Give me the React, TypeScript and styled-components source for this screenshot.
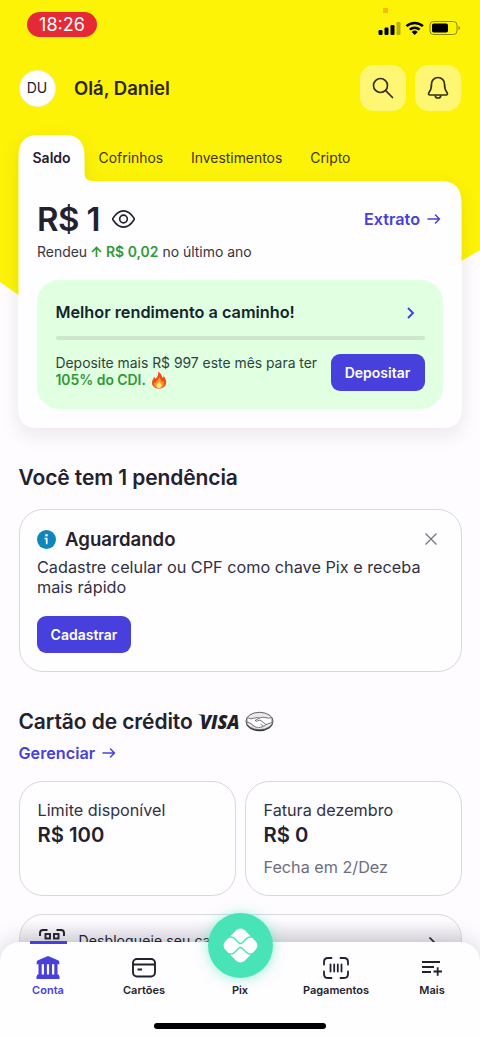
import React from "react";
import styled, { createGlobalStyle } from "styled-components";

const ink = "#222130";
const blue = "#4740dc";
const green = "#2f9a36";

const Global = createGlobalStyle`
  * { box-sizing: border-box; }
  body { margin: 0; background: #fefcff; font-family: Inter, "Liberation Sans", sans-serif; color: ${ink}; }
  svg { display: block; flex: none; }
`;

const Screen = styled.div`
  position: relative;
  width: 480px;
  height: 1038px;
  overflow: hidden;
  background: #fefcff;
`;
const Backdrop = styled.svg`
  position: absolute;
  top: 0;
  left: 0;
`;
const Content = styled.div`
  position: relative;
  padding: 0 18.5px;
`;
const StatusBar = styled.div`
  display: flex;
  justify-content: space-between;
  height: 56px;
  padding: 12px 0 0 8.5px;
`;
const StatusTray = styled.div`
  display: flex;
  align-items: center;
  height: 32px;
`;
const TimePill = styled.div`
  width: 70px;
  height: 25px;
  border-radius: 13px;
  background: #e62a35;
  color: #fff;
  font-size: 18px;
  line-height: 25px;
  text-align: center;
`;
const RecordDot = styled.i`
  position: absolute;
  left: 383px;
  top: 8px;
  width: 5px;
  height: 5px;
  background: #f4bd0c;
`;
const Header = styled.header`
  display: flex;
  align-items: center;
  height: 64px;
  padding-right: 0.5px;
`;
const Avatar = styled.div`
  width: 37px;
  height: 37px;
  border-radius: 50%;
  background: #fff;
  border: 1px solid #f3eecb;
  font-size: 14px;
  line-height: 34px;
  text-align: center;
`;
const Greeting = styled.h1`
  flex: 1;
  margin: 0 0 0 18.5px;
  font-size: 18.5px;
  font-weight: 600;
  color: #2d260f;
`;
const HeaderButton = styled.div`
  display: grid;
  place-items: center;
  width: 46px;
  height: 46px;
  margin-left: 9.5px;
  border-radius: 14px;
  background: #fff774;
`;
const Tabs = styled.nav`
  display: flex;
  height: 46px;
  margin-top: 15px;
`;
const Tab = styled.div<{ $active?: boolean }>`
  font-size: ${(p) => (p.$active ? 14 : 13.9)}px;
  line-height: 46px;
  margin-left: ${(p) => (p.$active ? 14 : 28)}px;
  font-weight: ${(p) => (p.$active ? 600 : 400)};
  color: ${(p) => (p.$active ? ink : "#41340f")};
`;
const BalanceCard = styled.section`
  height: 247px;
  padding: 19px 18.5px 0;
`;
const Row = styled.div`
  display: flex;
  align-items: center;
`;
const Amount = styled.div`
  margin-right: 12px;
  font-size: 33px;
  line-height: 38px;
  font-weight: 600;
  letter-spacing: -0.6px;
`;
const LinkText = styled.div<{ $end?: boolean }>`
  display: flex;
  align-items: center;
  gap: 7px;
  margin-left: ${(p) => (p.$end ? "auto" : 0)};
  margin-right: 2px;
  font-size: 16.2px;
  line-height: 22px;
  font-weight: 600;
  color: ${blue};
`;
const Yield = styled.div`
  display: flex;
  align-items: center;
  gap: 4px;
  margin-top: 5px;
  font-size: 13.95px;
  line-height: 18px;
  color: #363541;
`;
const Accent = styled.span`
  color: ${green};
  font-weight: 600;
`;
const Offer = styled.div`
  height: 129px;
  margin-top: 19px;
  padding: 22px 18.5px 0;
  border-radius: 22px;
  background: #e1ffe1;
`;
const OfferTitle = styled.div`
  display: flex;
  justify-content: space-between;
  align-items: center;
  padding-right: 10px;
  font-size: 16.25px;
  line-height: 21px;
  font-weight: 600;
  color: #12252c;
`;
const Progress = styled.div`
  height: 4px;
  margin-top: 12.5px;
  border-radius: 2px;
  background: #cfe6ce;
`;
const OfferBottom = styled.div`
  display: flex;
  justify-content: space-between;
  margin-top: 14px;
  font-size: 13.9px;
  line-height: 17.5px;
  color: #2d443a;
`;
const OfferText = styled.div`
  padding-top: 1px;
  white-space: nowrap;
  svg { display: inline-block; vertical-align: -4px; margin: -4px 0 0 1px; }
`;
const Button = styled.button`
  height: 37px;
  padding: 0;
  border: 0;
  border-radius: 9px;
  background: ${blue};
  color: #fff;
  font: 600 14px/37px Inter, sans-serif;
  width: 94px;
`;
const SectionTitle = styled.h2`
  display: flex;
  align-items: center;
  margin: 36px 0 0;
  font-size: 21px;
  line-height: 28px;
  font-weight: 600;
  letter-spacing: -0.1px;
`;
const Panel = styled.section`
  border: 1px solid #d9d7df;
  border-radius: 24px;
  background: #fefdff;
`;
const Pending = styled(Panel)`
  height: 163px;
  margin-top: 17px;
  padding: 17px 22.5px 0 17.5px;
`;
const PendingTitle = styled.div`
  flex: 1;
  margin-left: 9px;
  font-size: 18.6px;
  line-height: 24px;
  font-weight: 600;
`;
const PendingText = styled.p`
  margin: 6px 0 19px;
  font-size: 16.25px;
  line-height: 20px;
  color: #32313f;
`;
const Visa = styled.svg`
  margin-left: 5px;
`;
const CardLogo = styled.svg`
  margin-left: 2px;
  margin-top: -2px;
`;
const Manage = styled(Row)`
  margin-top: 6px;
`;
const Cards = styled.div`
  display: grid;
  grid-template-columns: 1fr 1fr;
  gap: 9px;
  margin-top: 17px;
`;
const InfoCard = styled(Panel)`
  height: 115px;
  padding: 16px 18px;
  font-size: 16.2px;
  line-height: 24px;
  color: #32313f;
`;
const Value = styled.div`
  font-size: 20.3px;
  line-height: 26px;
  font-weight: 600;
  color: ${ink};
`;
const Note = styled.div`
  margin-top: 7px;
  color: #6f6d7b;
`;
const Unlock = styled(Panel)`
  display: flex;
  height: 70px;
  margin-top: 18px;
  padding: 13px 24px 0 18px;
  font-size: 14px;
  line-height: 26px;
  background: linear-gradient(#fefcff 0 5px, #e4e2e8 28px);
`;
const UnlockText = styled.div`
  flex: 1;
  margin-left: 13px;
  letter-spacing: 0.1px;
`;
const BottomNav = styled.nav`
  position: absolute;
  left: 0;
  right: 0;
  bottom: 0;
  height: 96px;
  display: grid;
  grid-template-columns: repeat(5, 96px);
  border-radius: 20px 20px 0 0;
  background: #fefdff;
  box-shadow: 0 -2px 22px rgba(30, 25, 50, 0.16);
`;
const NavItem = styled.div<{ $active?: boolean }>`
  position: relative;
  display: flex;
  flex-direction: column;
  align-items: center;
  padding-top: 13px;
  font-size: 11px;
  line-height: 16px;
  font-weight: 600;
  color: ${(p) => (p.$active ? blue : ink)};
`;
const NavIcon = styled.div`
  display: grid;
  place-items: center;
  height: 26px;
  margin-bottom: 1px;
`;
const ActiveBar = styled.i`
  position: absolute;
  top: -1px;
  left: 29.5px;
  width: 37px;
  height: 3px;
  background: ${blue};
`;
const PixButton = styled.div`
  position: absolute;
  left: 15.5px;
  top: -29.5px;
  width: 65px;
  height: 65px;
  display: grid;
  place-items: center;
  border-radius: 50%;
  background: #48e4b7;
  box-shadow: 0 1px 13px rgba(72, 228, 183, 0.55);
`;
const HomeBar = styled.i`
  position: absolute;
  left: 154px;
  bottom: 9.5px;
  width: 172px;
  height: 6px;
  border-radius: 3px;
  background: #000;
`;

const Arrow = () => (
  <svg width="14" height="12" viewBox="0 0 14 12" fill="none" stroke="currentColor" strokeWidth="1.5" strokeLinecap="round" strokeLinejoin="round">
    <path d="M1 6h11.5M8.5 2l4 4-4 4" />
  </svg>
);

const Flame = () => (
  <svg width="16" height="18" viewBox="0 0 16 18">
    <path d="M7 .5C11 3 10.500 5.500 12 7c.6-.6.5-1.600.4-2.300 2 2.200 3 4.500 2.700 7.300-.4 3.600-3.400 5.500-7.100 5.500S1 15.500 1 12C1 9 2.500 8 3.300 6c.8.700 1 1.300 1.100 2C6.500 6 7.800 3.500 7 .5Z" fill="#ee4b20" />
    <path d="M8.300 5.500c.2 2.700 2.500 3.500 2.600 5.500.7-.3 1-1 1.100-1.600 1.600 3.500 1 7.300-3.600 7.600-4.200.2-6.300-2.600-5-6 .5.700.9 1 1.500 1.200C5 9.500 8 8.500 8.300 5.500Z" fill="#fb9928" />
    <path d="M8.500 10c.2 1.800 1.900 2.300 1.900 4.400 0 1.700-1 2.600-2.500 2.600-1.700 0-2.600-1.100-2.500-2.500C5.500 12.700 8 12.300 8.500 10Z" fill="#ffe878" />
  </svg>
);

const StatusIcons = () => (
  <svg width="84" height="16" viewBox="0 0 84 16">
    <rect x="0.500" y="10" width="4" height="5" rx="1.200" />
    <rect x="6.500" y="7.500" width="4" height="7.500" rx="1.200" />
    <rect x="12.500" y="5" width="4" height="10" rx="1.200" />
    <rect x="18.500" y="2" width="4" height="13" rx="1.200" opacity=".28" />
    <g fill="none" stroke="#000" strokeWidth="2.500">
      <path d="M28.500 6.200a12 12 0 0 1 16.400 0M31.800 9.700a7.100 7.100 0 0 1 9.800 0" />
    </g>
    <path d="M36.700 15l-3-3.100a4.400 4.400 0 0 1 6 0z" />
    <rect x="52" y="1.500" width="27" height="13" rx="3.500" fill="none" stroke="#8b880c" />
    <rect x="54" y="3.500" width="16" height="9" rx="1.800" />
    <path d="M80.500 6v4q1.500-.5 1.500-2t-1.500-2z" fill="#8b880c" />
  </svg>
);

const App = () => (
  <Screen>
    <Global />
    <Backdrop width="480" height="470" viewBox="0 0 480 470">
      <defs>
        <filter id="cardShadow" x="-20%" y="-20%" width="140%" height="140%">
          <feDropShadow dx="0" dy="7" stdDeviation="9" floodColor="#2c2440" floodOpacity=".09" />
        </filter>
      </defs>
      <path d="M0 0H480V250L365 318Q240 360 75 335L0 282Z" fill="#fdf307" />
      <path
        filter="url(#cardShadow)"
        d="M18.500 156Q18.500 135 38 135H65Q84.500 135 84.500 156V173Q84.500 181 92.500 181H441Q461.500 181 461.500 203V409Q461.500 428 442.500 428H37.500Q18.500 428 18.500 409Z"
        fill="#fefdff"
      />
    </Backdrop>
    <Content>
      <RecordDot />
      <StatusBar>
        <TimePill>18:26</TimePill>
        <StatusTray>
          <StatusIcons />
        </StatusTray>
      </StatusBar>
      <Header>
        <Avatar>DU</Avatar>
        <Greeting>Olá, Daniel</Greeting>
        <HeaderButton>
          <svg width="22" height="22" viewBox="0 0 22 22" fill="none" stroke="#362e16" strokeWidth="1.700" strokeLinecap="round">
            <circle cx="8.500" cy="8.500" r="7" />
            <path d="m13.700 13.700 6.800 6.800" />
          </svg>
        </HeaderButton>
        <HeaderButton>
          <svg width="22" height="24" viewBox="0 0 22 24" fill="none" stroke="#362e16" strokeWidth="1.700" strokeLinejoin="round">
            <path d="M4.500 8a6.500 6.500 0 0 1 13 0c0 5 .8 6.500 2.500 8.500.9 1.200.4 2.500-1 2.500H3c-1.400 0-1.900-1.300-1-2.500C3.700 14.500 4.500 13 4.500 8Z" />
            <path d="M8.200 19.200a2.800 2.800 0 0 0 5.600 0" />
          </svg>
        </HeaderButton>
      </Header>
      <Tabs>
        <Tab $active>Saldo</Tab>
        <Tab>Cofrinhos</Tab>
        <Tab>Investimentos</Tab>
        <Tab>Cripto</Tab>
      </Tabs>
      <BalanceCard>
        <Row>
          <Amount>R$ 1</Amount>
          <svg width="23" height="20" viewBox="0 0 24 20" fill="none" stroke={ink} strokeWidth="1.700">
            <path d="M1 10.800C.6 10.300.6 9.700 1 9.200 4 4.500 7.400 1.500 12 1.500s8 3 11 7.700c.4.500.4 1.100 0 1.600-3 4.700-6.400 7.700-11 7.700S4 15.500 1 10.800Z" />
            <circle cx="12" cy="10" r="4" />
          </svg>
          <LinkText $end>Extrato <Arrow /></LinkText>
        </Row>
        <Yield>
          <span>Rendeu</span>
          <svg width="11" height="12" viewBox="0 0 11 12" fill="none" stroke={green} strokeWidth="1.700">
            <path d="M5.500 11V1.500M1 6l4.500-4.500L10 6" />
          </svg>
          <Accent>R$ 0,02</Accent>
          <span>no último ano</span>
        </Yield>
        <Offer>
          <OfferTitle>
            Melhor rendimento a caminho!
            <svg width="9" height="12" viewBox="0 0 9 12" fill="none" stroke={blue} strokeWidth="1.900">
              <path d="m2 1 5 5-5 5" />
            </svg>
          </OfferTitle>
          <Progress />
          <OfferBottom>
            <OfferText>
              Deposite mais R$ 997 este mês para ter
              <br />
              <Accent>105% do CDI.</Accent> <Flame />
            </OfferText>
            <Button>Depositar</Button>
          </OfferBottom>
        </Offer>
      </BalanceCard>
      <SectionTitle>Você tem 1 pendência</SectionTitle>
      <Pending>
        <Row>
          <svg width="19" height="19" viewBox="0 0 19 19">
            <circle cx="9.500" cy="9.500" r="9.500" fill="#0c86bd" />
            <circle cx="9.500" cy="5.200" r="1.300" fill="#fff" />
            <path d="M7.500 8.500h2.200v5.700" fill="none" stroke="#fff" strokeWidth="1.700" />
          </svg>
          <PendingTitle>Aguardando</PendingTitle>
          <svg width="14" height="14" viewBox="0 0 14 14" stroke="#757382" strokeWidth="1.300">
            <path d="m1.500 1.500 11 11m0-11-11 11" />
          </svg>
        </Row>
        <PendingText>
          Cadastre celular ou CPF como chave Pix e receba
          <br />
          mais rápido
        </PendingText>
        <Button>Cadastrar</Button>
      </Pending>
      <SectionTitle>
        Cartão de crédito
        <Visa width="45" height="28" viewBox="0 0 45 28">
          <path d="M0 6.500h6l-1 1.600-2-.4z" fill="#20202b" />
          <text x="2" y="20.500" fontFamily="Open Sans" fontSize="19.500" fontWeight="800" fontStyle="italic" textLength="39.500" lengthAdjust="spacingAndGlyphs" fill="#20202b">VISA</text>
        </Visa>
        <CardLogo width="29" height="21" viewBox="0 0 29 21" fill="none" stroke="#55555f">
          <ellipse cx="14.500" cy="11" rx="13.700" ry="9.200" fill="#30303a" stroke="none" />
          <ellipse cx="14.500" cy="10" rx="13.500" ry="8.700" fill="#e9e8ed" strokeWidth=".9" />
          <path d="M2 6.500q4 2.300 7 .7 3-1.200 5.500-.2 3-1.300 5.500-.5 4 1.500 7 0L27 11.500l-6 2q-.5 1.500-2.800 1.700-1 1.500-2.700 1-2 1-3 0-1.700.5-2.500-.6-2-.2-2-1.600-2 0-2-1.600L2 11.200Z" fill="#fff" strokeWidth=".8" />
          <path d="M14.500 7 10 9.500q1 1.700 5-.5l6 4.500M15.500 13l2.700 2.200" strokeWidth=".8" />
        </CardLogo>
      </SectionTitle>
      <Manage>
        <LinkText>Gerenciar <Arrow /></LinkText>
      </Manage>
      <Cards>
        <InfoCard>
          Limite disponível
          <Value>R$ 100</Value>
        </InfoCard>
        <InfoCard>
          Fatura dezembro
          <Value>R$ 0</Value>
          <Note>Fecha em 2/Dez</Note>
        </InfoCard>
      </Cards>
      <Unlock>
        <svg width="28" height="28" viewBox="0 0 28 28" fill="none" stroke={ink} strokeWidth="1.900">
          <path d="M2 8V5q0-3 3-3h4.500M18.500 2H23q3 0 3 3v3" />
          <rect x="7.500" y="6" width="4.500" height="4.500" />
          <rect x="16" y="6" width="4.500" height="4.500" />
        </svg>
        <UnlockText>Desbloqueie seu cartão</UnlockText>
        <svg width="9" height="22" viewBox="0 0 9 22" fill="none" stroke={ink} strokeWidth="1.700">
          <path d="m1.500 9.500 5 5-5 5" />
        </svg>
      </Unlock>
    </Content>
    <BottomNav>
      <NavItem $active>
        <ActiveBar />
        <NavIcon>
          <svg width="24" height="24" viewBox="0 0 24 24" fill="currentColor">
            <path d="M12 0 22.500 4.500q.8.500.8 1.500V8.200H.7V6Q.7 5 1.500 4.500ZM2.500 8h3.200v11H2.500zM8 8h2.900v11H8zM13.100 8H16v11h-2.900zM18.300 8h3.200v11h-3.200zM1.500 18.500h21l1 2V23H.5v-2.500z" />
          </svg>
        </NavIcon>
        Conta
      </NavItem>
      <NavItem>
        <NavIcon>
          <svg width="24" height="20" viewBox="0 0 24 20" fill="none" stroke="currentColor" strokeWidth="1.900">
            <rect x="1" y="1" width="22" height="17.500" rx="4" />
            <path d="M1 6.500h22M5.500 11.500H10" />
          </svg>
        </NavIcon>
        Cartões
      </NavItem>
      <NavItem>
        <PixButton>
          <svg width="39" height="39" viewBox="0 0 39 39">
            <rect x="5.800" y="5.800" width="27.400" height="27.400" rx="6" transform="rotate(45 19.500 19.500)" fill="#fff" />
            <path d="M3 11h7q2 0 3.500 1.500l4.200 4.200q1.800 1.800 3.600 0l4.200-4.200Q27 11 29 11h7M3 28h7q2 0 3.500-1.500l4.200-4.200q1.800-1.800 3.600 0l4.200 4.200Q27 28 29 28h7" fill="none" stroke="#48e4b7" strokeWidth="1.400" />
          </svg>
        </PixButton>
        <NavIcon />
        Pix
      </NavItem>
      <NavItem>
        <NavIcon>
          <svg width="26" height="22" viewBox="0 0 26 22" fill="none" stroke="currentColor" strokeWidth="1.800" strokeLinecap="round">
            <path d="M1 7.500V5q0-4 4-4h3.500M17.500 1H21q4 0 4 4v2.500M25 14.500V17q0 4-4 4h-3.500M8.500 21H5q-4 0-4-4v-2.500M7.500 7.500v7M11.200 7.500v7M14.800 7.500v7M18.500 7.500v7" />
          </svg>
        </NavIcon>
        Pagamentos
      </NavItem>
      <NavItem>
        <NavIcon>
          <svg width="22" height="16" viewBox="0 0 22 16" fill="none" stroke="currentColor" strokeWidth="1.800">
            <path d="M1 2h18M1 7h12M1 12h9M12.500 11.500H21M16.700 7.200v8.600" />
          </svg>
        </NavIcon>
        Mais
      </NavItem>
      <HomeBar />
    </BottomNav>
  </Screen>
);

export default App;
